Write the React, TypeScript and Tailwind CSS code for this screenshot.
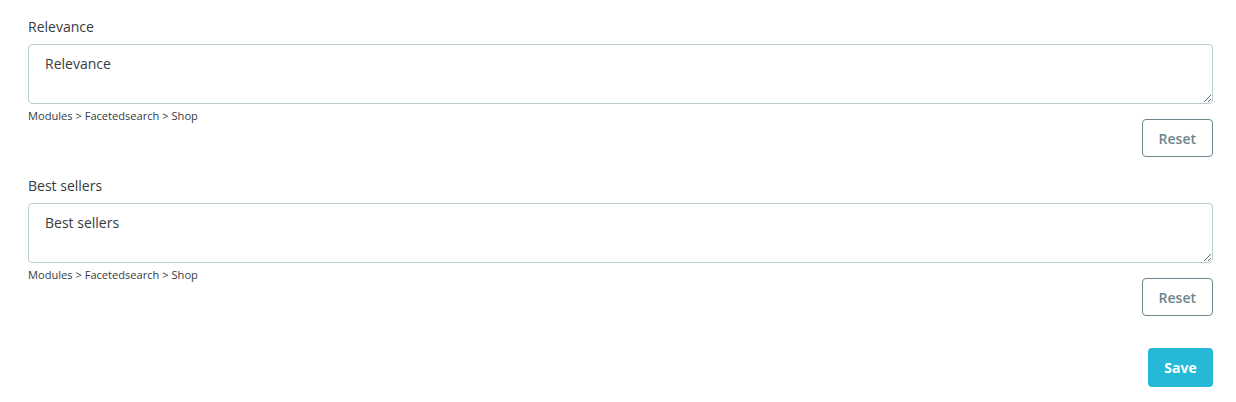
import React from 'react';

const rows = [
  { label: 'Relevance', value: 'Relevance' },
  { label: 'Best sellers', value: 'Best sellers' },
];

function TranslationRow({ label, value }: { label: string; value: string }) {
  return (
    <div className="mt-[18px] first:mt-0">
      <label className="block text-[14px] leading-[21px] text-[#363a41]">{label}</label>
      <textarea
        defaultValue={value}
        className="mt-[7px] block h-[60px] w-full rounded-[4px] border border-[#bbcdd2] bg-white px-[16px] pb-[8px] pt-[8px] text-[14px] leading-[21px] text-[#363a41] outline-none"
      />
      <div className="flex items-start justify-between">
        <small className="mt-[5px] text-[11.1px] leading-[14px] text-[#363a41]">
          Modules &gt; Facetedsearch &gt; Shop
        </small>
        <button
          type="button"
          className="mt-[15px] h-[38px] rounded-[4px] border border-[#6c868e] bg-white px-[16px] text-[14px] font-semibold text-[#6c868e]"
        >
          Reset
        </button>
      </div>
    </div>
  );
}

export default function App() {
  return (
    <div
      className="min-h-[402px] w-full bg-white pl-[28px] pr-[23px] pt-[16px]"
      style={{ fontFamily: '"Open Sans", "Noto Sans", sans-serif' }}
    >
      {rows.map((r) => (
        <TranslationRow key={r.label} label={r.label} value={r.value} />
      ))}
      <div className="mt-[32px] flex justify-end">
        <button
          type="button"
          className="h-[39px] w-[65px] rounded-[4px] bg-[#25b9d7] text-[14px] font-bold text-white"
        >
          Save
        </button>
      </div>
    </div>
  );
}
